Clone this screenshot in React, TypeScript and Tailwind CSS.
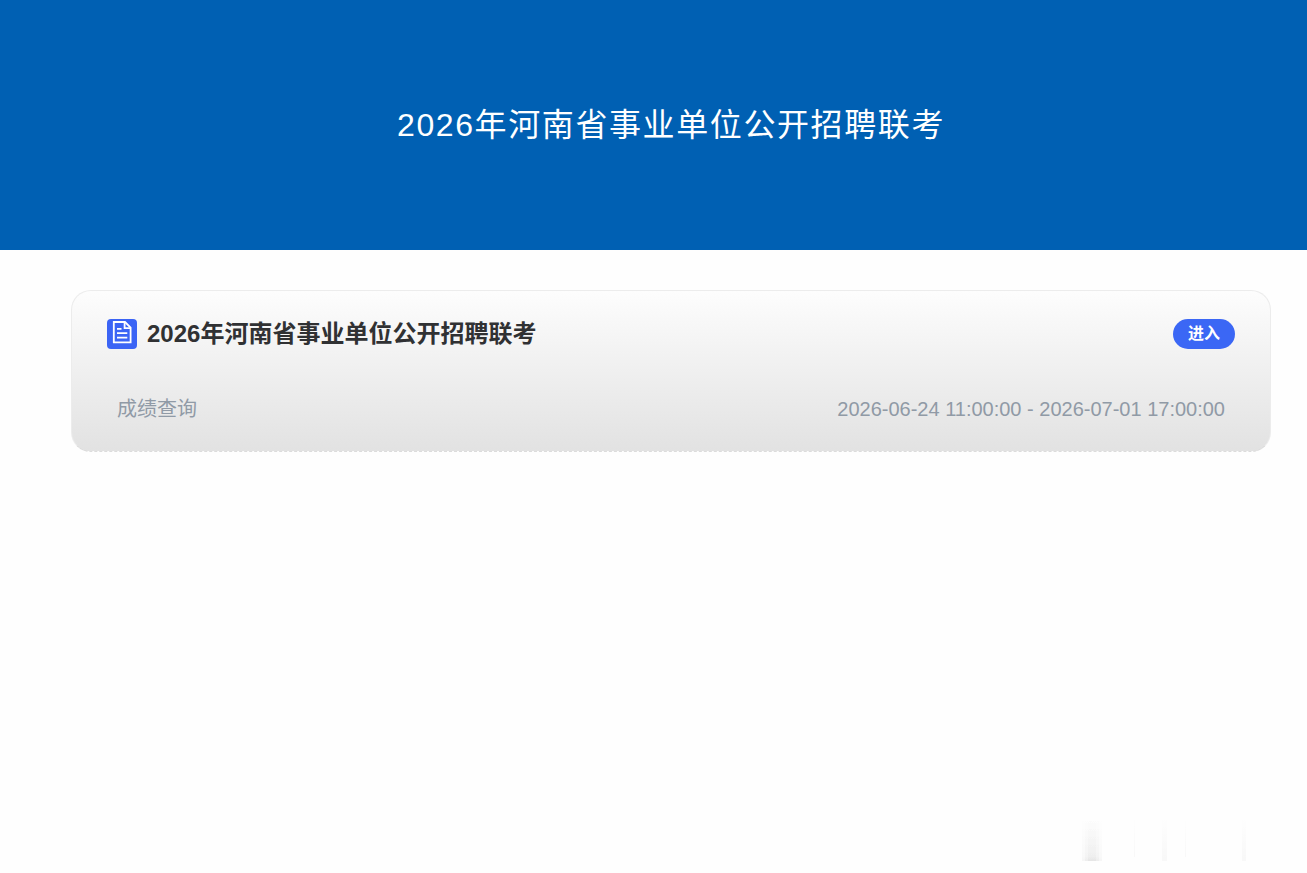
type Exam = {
  id: number;
  name: string;
  stages: Array<{ label: string; start: string; end: string }>;
};

const siteTitle = "2026年河南省事业单位公开招聘联考";

const exams: Exam[] = [
  {
    id: 1,
    name: "2026年河南省事业单位公开招聘联考",
    stages: [
      { label: "成绩查询", start: "2026-06-24 11:00:00", end: "2026-07-01 17:00:00" }
    ]
  }
];

function DocumentIcon() {
  return (
    <svg
      viewBox="0 0 30 30"
      className="h-[30px] w-[30px] shrink-0 rounded bg-[#3b64f5]"
      fill="none"
      stroke="#ffffff"
      strokeWidth="1.8"
      aria-hidden="true"
    >
      <path d="M6.8 3H18L23.6 8.6V23.4H6.8Z" />
      <path d="M17.6 3V9.2H23.6" />
      <path d="M10 9.8H14.5M10 14.2H20.3M10 18.7H20.3" />
    </svg>
  );
}

// faint vertical streaks fading in towards the page bottom
function FooterStreaks() {
  return (
    <svg viewBox="0 0 170 44" className="h-11 w-[170px]" aria-hidden="true">
      <defs>
        <linearGradient id="streak-fade" x1="0" y1="0" x2="0" y2="1">
          <stop offset="0" stopColor="#000000" stopOpacity="0" />
          <stop offset="1" stopColor="#000000" stopOpacity="0.025" />
        </linearGradient>
        <linearGradient id="streak-wide" x1="0" y1="0" x2="0" y2="1">
          <stop offset="0" stopColor="#000000" stopOpacity="0" />
          <stop offset="0.9" stopColor="#000000" stopOpacity="0.02" />
          <stop offset="1" stopColor="#000000" stopOpacity="0.035" />
        </linearGradient>
      </defs>
      <rect x="4" y="0" width="20" height="44" fill="url(#streak-wide)" />
      <rect x="7" y="0" width="14" height="44" fill="url(#streak-wide)" />
      <rect x="10" y="0" width="8" height="44" fill="url(#streak-wide)" />
      <rect x="56" y="0" width="1" height="40" fill="url(#streak-fade)" />
      <rect x="84" y="0" width="5" height="44" fill="url(#streak-fade)" />
      <rect x="107" y="0" width="1" height="40" fill="url(#streak-fade)" />
      <rect x="164" y="0" width="4" height="44" fill="url(#streak-fade)" />
    </svg>
  );
}

function ExamCard({ exam }: { exam: Exam }) {
  return (
    <section className="rounded-[20px] border border-[#ececec] border-b-[#dcdcdc] [border-bottom-style:dashed] bg-linear-to-b from-[#fdfdfd] to-[#e2e2e2] px-[35px] pt-7 pb-[25px]">
      <div className="flex items-center justify-between">
        <div className="flex items-center gap-[10px]">
          <DocumentIcon />
          <h2 className="text-2xl leading-[30px] font-bold text-[#303133]">{exam.name}</h2>
        </div>
        <button
          type="button"
          className="h-[30px] rounded-full bg-[#3b67f5] px-[15px] text-base leading-[30px] font-bold text-white hover:bg-[#2f58e0]"
        >
          进入
        </button>
      </div>
      <ul className="mt-[43px] px-[10px]">
        {exam.stages.map((stage) => (
          <li
            key={stage.label}
            className="flex items-center justify-between text-xl leading-[34px] text-[#909aa6]"
          >
            <span>{stage.label}</span>
            <span>
              {stage.start} - {stage.end}
            </span>
          </li>
        ))}
      </ul>
    </section>
  );
}

function App() {
  return (
    <div className="flex min-h-screen flex-col bg-[#fefefe] font-['Liberation_Sans','Noto_Sans_CJK_SC',sans-serif]">
      <header className="flex h-[250px] items-center justify-center bg-[#0060b3] pr-9 pl-[71px]">
        <h1 className="text-[32px] leading-10 tracking-wider text-white">{siteTitle}</h1>
      </header>
      <main className="flex flex-col gap-5 pt-10 pr-9 pb-10 pl-[71px]">
        {exams.map((exam) => (
          <ExamCard key={exam.id} exam={exam} />
        ))}
      </main>
      <footer className="mt-auto flex justify-end pr-[59px] pb-3">
        <FooterStreaks />
      </footer>
    </div>
  );
}

export default App;
